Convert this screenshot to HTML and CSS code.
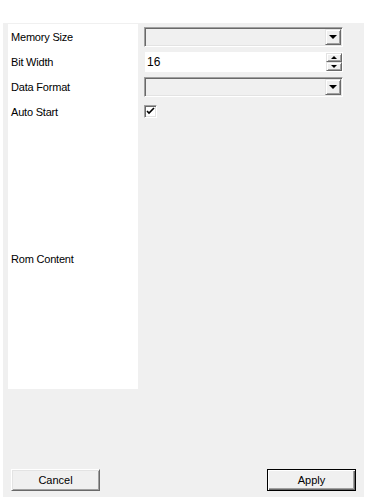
FILE: index.html
```html
<!DOCTYPE html>
<html lang="en">

<head>
    <meta charset="UTF-8">
    <meta name="viewport" content="width=device-width, initial-scale=1.0">
    <title>ROM Properties</title>
    <link rel="stylesheet" href="styles.css">
</head>

<body>
    <div class="panel">
        <div class="props">
            <div class="label">Memory Size</div>
            <div class="field">
                <div class="combo">
                    <span class="drop"><span class="arrow"></span></span>
                </div>
            </div>

            <div class="label">Bit Width</div>
            <div class="field">
                <div class="spin">
                    <span class="value">16</span>
                    <span class="spin-btns">
                        <span class="spin-btn"><span class="up"></span></span>
                        <span class="spin-btn"><span class="down"></span></span>
                    </span>
                </div>
            </div>

            <div class="label">Data Format</div>
            <div class="field">
                <div class="combo">
                    <span class="drop"><span class="arrow"></span></span>
                </div>
            </div>

            <div class="label">Auto Start</div>
            <div class="field">
                <div class="check">
                    <svg width="9" height="9" viewBox="0 0 9 9">
                        <path d="M1 4 L3 6 L8 1" fill="none" stroke="#000" stroke-width="1.6"/>
                    </svg>
                </div>
            </div>

            <div class="label rom">Rom Content</div>
            <div class="field"></div>
        </div>

        <div class="actions">
            <button class="btn">Cancel</button>
            <button class="btn default">Apply</button>
        </div>
    </div>
</body>

</html>
```

FILE: styles.css
```css
body {
    margin: 0;
    background: #ffffff;
    font-family: "Liberation Sans", Arial, sans-serif;
    font-size: 11px;
    color: #000000;
}

.panel {
    display: flex;
    flex-direction: column;
    margin: 23px 0 0 3px;
    width: 361px;
    height: 474px;
    box-sizing: border-box;
    padding: 1px 0 6px 5px;
    background: #f0f0f0;
}

.props {
    display: grid;
    grid-template-columns: 130px 1fr;
    grid-template-rows: 25px 25px 25px 25px 1fr;
    height: 365px;
}

.label {
    display: flex;
    align-items: center;
    padding-left: 3px;
    background: #ffffff;
    letter-spacing: -0.2px;
}

.rom {
    padding-top: 4px;
}

.field {
    display: flex;
    align-items: center;
    padding-left: 6px;
}

/* sunken combo box with drop button */
.combo {
    display: flex;
    justify-content: flex-end;
    align-items: stretch;
    width: 199px;
    height: 20px;
    box-sizing: border-box;
    padding: 1px;
    border: 1px solid;
    border-color: #a0a0a0 #ffffff #ffffff #a0a0a0;
    box-shadow: inset 1px 1px #696969, inset -1px -1px #e3e3e3;
    background: #f0f0f0;
}

.drop {
    display: flex;
    align-items: center;
    justify-content: center;
    width: 16px;
    box-sizing: border-box;
    border: 1px solid;
    border-color: #e3e3e3 #696969 #696969 #e3e3e3;
    box-shadow: inset 1px 1px #ffffff, inset -1px -1px #a0a0a0;
    background: #f0f0f0;
}

.arrow {
    width: 0;
    height: 0;
    border-left: 4px solid transparent;
    border-right: 4px solid transparent;
    border-top: 4px solid #000000;
}

/* numeric spinner */
.spin {
    display: flex;
    align-items: center;
    width: 198px;
    height: 20px;
    margin-left: 1px;
    background: #ffffff;
}

.value {
    flex: 1;
    padding-left: 2px;
    font-size: 12px;
}

.spin-btns {
    display: flex;
    flex-direction: column;
    width: 16px;
    height: 18px;
    margin-right: 1px;
}

.spin-btn {
    display: flex;
    align-items: center;
    justify-content: center;
    flex: 1;
    box-sizing: border-box;
    border: 1px solid;
    border-color: #e3e3e3 #696969 #696969 #e3e3e3;
    box-shadow: inset 1px 1px #ffffff, inset -1px -1px #a0a0a0;
    background: #f0f0f0;
}

.up {
    width: 0;
    height: 0;
    border-left: 3px solid transparent;
    border-right: 3px solid transparent;
    border-bottom: 3px solid #000000;
}

.down {
    width: 0;
    height: 0;
    border-left: 3px solid transparent;
    border-right: 3px solid transparent;
    border-top: 3px solid #000000;
}

.check {
    display: flex;
    align-items: center;
    justify-content: center;
    width: 13px;
    height: 13px;
    box-sizing: border-box;
    border: 1px solid;
    border-color: #a0a0a0 #ffffff #ffffff #a0a0a0;
    box-shadow: inset 1px 1px #696969, inset -1px -1px #e3e3e3;
    background: #ffffff;
}

.actions {
    display: flex;
    justify-content: space-between;
    margin-top: auto;
    padding: 0 8px 0 3px;
}

.btn {
    width: 89px;
    height: 22px;
    padding: 0;
    font-family: "Liberation Sans", Arial, sans-serif;
    font-size: 11px;
    color: #000000;
    background: #f0f0f0;
    border: 1px solid;
    border-color: #ffffff #696969 #696969 #ffffff;
    box-shadow: inset 1px 1px #e3e3e3, inset -1px -1px #a0a0a0;
    border-radius: 0;
}

.btn.default {
    border-color: #000000;
    box-shadow: inset 1px 1px #ffffff, inset -1px -1px #696969, inset -2px -2px #a0a0a0;
}
```
